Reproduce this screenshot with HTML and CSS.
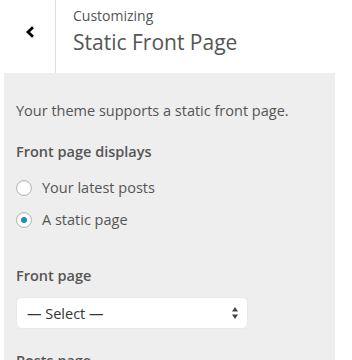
FILE: index.html
```html
<!DOCTYPE html>
<html lang="en">
<head>
    <meta charset="UTF-8">
    <title>Customizing - Static Front Page</title>
    <link rel="stylesheet" href="styles.css">
</head>
<body>
    <div class="panel">
        <div class="head">
            <button class="back" aria-label="Back">
                <svg width="10" height="12" viewBox="0 0 10 12">
                    <path d="M8 1.3 L3 6 L8 10.7" fill="none" stroke="#000" stroke-width="2.8"/>
                </svg>
            </button>
            <div class="title">
                <span class="sub">Customizing</span>
                <h2>Static Front Page</h2>
            </div>
        </div>

        <div class="content">
            <p class="desc">Your theme supports a static front page.</p>

            <div class="field">
                <span class="label">Front page displays</span>
                <label class="radio"><span class="dot"></span>Your latest posts</label>
                <label class="radio"><span class="dot checked"></span>A static page</label>
            </div>

            <div class="field">
                <span class="label">Front page</span>
                <div class="select">
                    <span>— Select —</span>
                    <svg width="6" height="12" viewBox="0 0 6 12">
                        <path d="M3 0 L6 4.5 L0 4.5 Z M0 7.5 L6 7.5 L3 12 Z" fill="#444"/>
                    </svg>
                </div>
            </div>

            <div class="field">
                <span class="label">Posts page</span>
            </div>
        </div>
    </div>
</body>
</html>
```

FILE: styles.css
```css
html {
    font-family: "Open Sans", sans-serif;
}

body {
    margin: 0;
    background-color: #fff;
    color: #555;
    overflow: hidden;
}

.panel {
    width: 331px;
    margin-left: 4px;
}

.head {
    display: flex;
    height: 73px;
    margin-left: -4px;
    width: 352px;
    background-color: #fff;
}

.back {
    width: 56px;
    height: 73px;
    border: none;
    border-right: 1px solid #ddd;
    background: #fff;
    padding: 0 0 10px 4px;
    display: flex;
    align-items: center;
    justify-content: center;
}

.title {
    padding: 6px 0 0 17px;
}

.sub {
    display: block;
    font-size: 14px;
    line-height: 20px;
    color: #555;
}

.title h2 {
    margin: 0;
    font-size: 21px;
    font-weight: normal;
    line-height: 32px;
    color: #555;
}

.content {
    box-sizing: border-box;
    height: 287px;
    overflow: hidden;
    background-color: #eee;
    padding: 27px 12px 0;
    font-size: 14.5px;
}

.desc {
    margin: 0 0 19px;
    line-height: 22px;
}

.field {
    margin-bottom: 34px;
}

.label {
    display: block;
    font-weight: 600;
    line-height: 22px;
    margin-bottom: 14px;
}

.radio {
    display: flex;
    align-items: center;
    gap: 10px;
    line-height: 22px;
    margin-bottom: 10px;
}

.radio:last-child {
    margin-bottom: 0;
}

.dot {
    width: 16px;
    height: 16px;
    box-sizing: border-box;
    border-radius: 50%;
    border: 1px solid #b4b9be;
    background: #fff;
    box-shadow: inset 0 1px 2px rgba(0, 0, 0, 0.1);
    display: flex;
    align-items: center;
    justify-content: center;
}

.dot.checked::after {
    content: "";
    width: 6px;
    height: 6px;
    border-radius: 50%;
    background: #1e8cbe;
}

.select {
    display: flex;
    align-items: center;
    justify-content: space-between;
    width: 230px;
    height: 30px;
    box-sizing: border-box;
    margin: -3px 0 0 1px;
    padding: 0 9px 0 10px;
    background: #fff;
    border-radius: 4px;
    box-shadow: 0 0 1px rgba(0, 0, 0, 0.2);
    color: #333;
}

.field:nth-child(3) {
    margin-bottom: 22px;
}
```
